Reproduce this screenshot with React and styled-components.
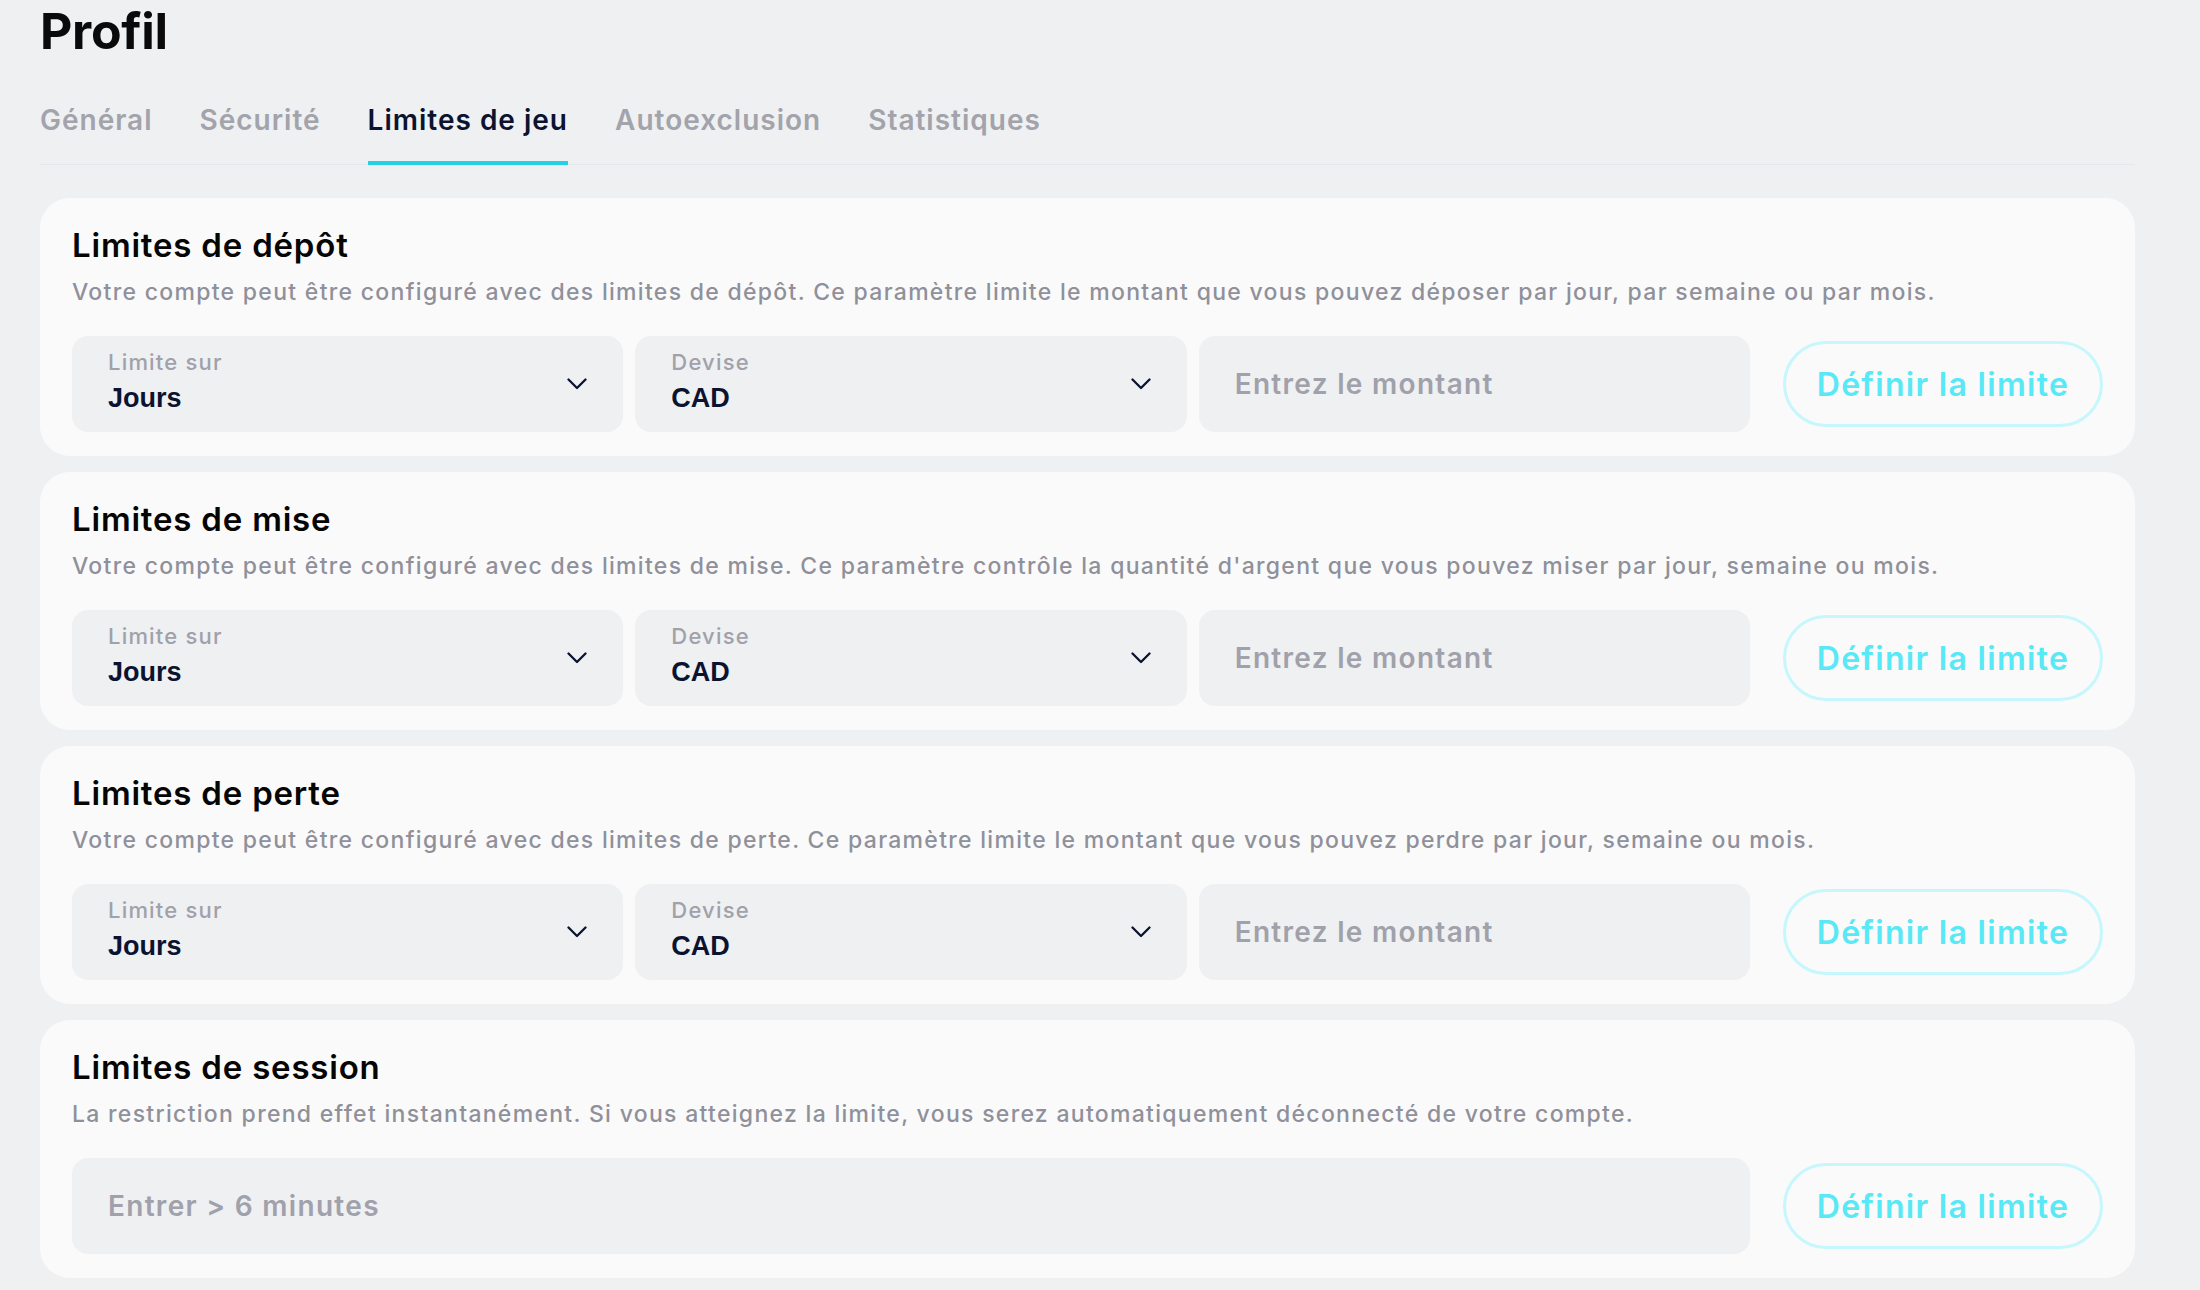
import styled, { createGlobalStyle } from 'styled-components'

const GlobalStyle = createGlobalStyle`
    body {
        margin: 0;
        background: #eff0f2;
        font-family: Inter, "Open Sans", sans-serif;
    }
`;

const Page = styled.div`
    padding: 0 65px 0 40px;
`;

const Heading = styled.h1`
    margin: 0;
    padding-top: 1px;
    font-size: 50px;
    line-height: 60px;
    font-weight: 700;
    color: #0a0a0a;
    letter-spacing: -0.3px;
`;

const TabBar = styled.div`
    display: flex;
    gap: 47px;
    margin-top: 41px;
    border-bottom: 1px solid #e6e7ea;
`;

const Tab = styled.div`
    font-size: 28px;
    font-weight: 600;
    line-height: 36px;
    letter-spacing: 1px;
    padding-bottom: 23px;
    margin-bottom: -1px;
    color: ${props => props.$active ? '#0b1330' : '#a2a3ab'};
    border-bottom: 4px solid ${props => props.$active ? '#22d3e3' : 'transparent'};
`;

const CardList = styled.div`
    display: flex;
    flex-direction: column;
    gap: 16px;
    margin-top: 33px;
`;

const Card = styled.section`
    background: #fafafa;
    border-radius: 30px;
    padding: 27px 32px 24px;
`;

const CardTitle = styled.h2`
    margin: 0;
    font-size: 33px;
    line-height: 40px;
    font-weight: 600;
    letter-spacing: 0.8px;
    color: #050505;
`;

const Description = styled.p`
    margin: 12px 0 0;
    font-size: 23px;
    line-height: 30px;
    font-weight: 500;
    letter-spacing: 1.3px;
    color: #8f909a;
`;

const Controls = styled.div`
    display: grid;
    grid-template-columns: 1fr 1fr 1fr 341px;
    column-gap: 12px;
    align-items: center;
    margin-top: 29px;
`;

const Field = styled.div`
    grid-column: span ${props => props.$span || 1};
    height: 96px;
    box-sizing: border-box;
    border-radius: 16px;
    background: #eff0f2;
    padding: 0 36px 0 36px;
    display: flex;
    align-items: center;
    justify-content: space-between;
`;

const FieldText = styled.div`
    display: flex;
    flex-direction: column;
    padding-bottom: 6px;
`;

const Label = styled.span`
    font-size: 22px;
    line-height: 26px;
    font-weight: 500;
    letter-spacing: 1.2px;
    color: #a0a1aa;
    margin-bottom: 7px;
`;

const Value = styled.span`
    font-family: "Liberation Sans", Arial, sans-serif;
    font-size: 27px;
    line-height: 32px;
    font-weight: 700;
    color: #0b1330;
`;

const Placeholder = styled.span`
    font-size: 28px;
    font-weight: 600;
    letter-spacing: 1.3px;
    color: #a0a1aa;
`;

const LimitButton = styled.button`
    justify-self: end;
    width: 320px;
    height: 86px;
    border-radius: 43px;
    border: 3px solid #c6f7fc;
    background: transparent;
    font-family: inherit;
    font-size: 32px;
    font-weight: 600;
    letter-spacing: 1.3px;
    color: #58e8f6;
    cursor: pointer;
`;

const Chevron = () => (
    <svg width="20" height="12" viewBox="0 0 20 12" fill="none">
        <path d="M1.5 1.5 L10 10 L18.5 1.5" stroke="#0b1330" strokeWidth="2.3" strokeLinecap="round" strokeLinejoin="round" />
    </svg>
);

const Select = ({ label, value }) => (
    <Field>
        <FieldText>
            <Label>{label}</Label>
            <Value>{value}</Value>
        </FieldText>
        <Chevron />
    </Field>
);

const tabs = ['Général', 'Sécurité', 'Limites de jeu', 'Autoexclusion', 'Statistiques'];

const limits = [
    {
        title: 'Limites de dépôt',
        text: 'Votre compte peut être configuré avec des limites de dépôt. Ce paramètre limite le montant que vous pouvez déposer par jour, par semaine ou par mois.',
    },
    {
        title: 'Limites de mise',
        text: "Votre compte peut être configuré avec des limites de mise. Ce paramètre contrôle la quantité d'argent que vous pouvez miser par jour, semaine ou mois.",
    },
    {
        title: 'Limites de perte',
        text: 'Votre compte peut être configuré avec des limites de perte. Ce paramètre limite le montant que vous pouvez perdre par jour, semaine ou mois.',
    },
];

const App = () => {
    return (
        <>
            <GlobalStyle />
            <Page>
                <Heading>Profil</Heading>
                <TabBar>
                    {tabs.map(t => (
                        <Tab key={t} $active={t === 'Limites de jeu'}>{t}</Tab>
                    ))}
                </TabBar>
                <CardList>
                    {limits.map(l => (
                        <Card key={l.title}>
                            <CardTitle>{l.title}</CardTitle>
                            <Description>{l.text}</Description>
                            <Controls>
                                <Select label="Limite sur" value="Jours" />
                                <Select label="Devise" value="CAD" />
                                <Field>
                                    <Placeholder>Entrez le montant</Placeholder>
                                </Field>
                                <LimitButton>Définir la limite</LimitButton>
                            </Controls>
                        </Card>
                    ))}
                    <Card>
                        <CardTitle>Limites de session</CardTitle>
                        <Description>La restriction prend effet instantanément. Si vous atteignez la limite, vous serez automatiquement déconnecté de votre compte.</Description>
                        <Controls>
                            <Field $span={3}>
                                <Placeholder>Entrer &gt; 6 minutes</Placeholder>
                            </Field>
                            <LimitButton>Définir la limite</LimitButton>
                        </Controls>
                    </Card>
                </CardList>
            </Page>
        </>
    )
}

export default App;
